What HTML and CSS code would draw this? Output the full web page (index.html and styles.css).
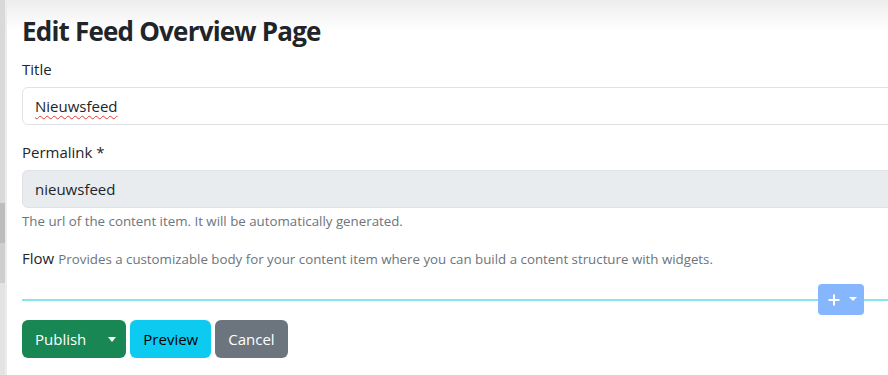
FILE: index.html
```html
<!DOCTYPE html>
<html>
<head>
<meta charset="utf-8">
<link rel="stylesheet" href="styles.css">
</head>
<body>
<div class="layout">
  <div class="rail">
    <div class="rail-track">
      <div class="rail-a"></div>
      <div class="rail-thumb"></div>
      <div class="rail-b"></div>
      <div class="rail-c"></div>
    </div>
    <div class="rail-edge"></div>
  </div>
  <main class="main">
    <h1 class="title">Edit Feed Overview Page</h1>
    <div class="field">
      <label class="label">Title</label>
      <div class="input"><span class="spell">Nieuwsfeed</span></div>
    </div>
    <div class="field">
      <label class="label">Permalink *</label>
      <div class="input input-disabled">nieuwsfeed</div>
      <div class="hint">The url of the content item. It will be automatically generated.</div>
    </div>
    <div class="field flow">
      <span class="label-inline">Flow</span> <span class="hint-inline">Provides a customizable body for your content item where you can build a content structure with widgets.</span>
    </div>
    <div class="flow-line">
      <button class="add-btn">
        <svg width="12" height="12" viewBox="0 0 12 12"><path d="M6 0.5V11.5M0.5 6H11.5" stroke="#fff" stroke-width="2"/></svg>
        <span class="caret caret-sm"></span>
      </button>
    </div>
    <div class="actions">
      <div class="split">
        <button class="btn btn-green">Publish</button>
        <button class="btn btn-green toggle"><span class="caret"></span></button>
      </div>
      <button class="btn btn-cyan">Preview</button>
      <button class="btn btn-grey">Cancel</button>
    </div>
  </main>
</div>
</body>
</html>
```
FILE: styles.css
```css
html, body {
  margin: 0;
  padding: 0;
  background: #fff;
  overflow: hidden;
  font-family: "Open Sans", "Noto Sans", sans-serif;
  color: #212529;
}
.layout {
  display: flex;
  width: 888px;
  height: 375px;
}
.rail {
  display: flex;
  flex: 0 0 7px;
}
.rail-track {
  width: 5px;
  display: flex;
  flex-direction: column;
}
.rail-a { height: 203px; background: #d9d9d9; }
.rail-thumb { height: 40px; background: #bcbcbc; }
.rail-b { height: 40px; background: #cfcfcf; }
.rail-c { flex: 1; background: #e3e3e3; }
.rail-edge { width: 2px; background: #ececec; }
.main {
  flex: 1;
  padding: 0 0 0 15px;
  min-width: 0;
  background: linear-gradient(#ededed 0px, #fafafa 22px, #fff 32px);
}
.title {
  margin: 0;
  padding-top: 14px;
  font-size: 26px;
  font-weight: 700;
  line-height: 34px;
  letter-spacing: -0.8px;
  color: #212529;
}
.field { margin-top: 11px; }
.label {
  display: block;
  font-size: 15px;
  line-height: 20px;
  margin-bottom: 8px;
}
.input {
  width: 900px;
  height: 38px;
  box-sizing: border-box;
  border: 1px solid #dee2e6;
  border-radius: 6px;
  padding: 0 12px;
  font-size: 15px;
  line-height: 36px;
  color: #212529;
}
.spell {
  text-decoration: underline wavy #e53935;
  text-decoration-thickness: 1px;
  text-underline-offset: 3px;
}
.input-disabled {
  background: #e9ecef;
}
.field + .field { margin-top: 17px; }
.hint {
  font-size: 13.3px;
  line-height: 18px;
  margin-top: 4px;
  color: #6c757d;
}
.field.flow { margin-top: 18px; line-height: 20px; }
.label-inline { font-size: 15px; }
.hint-inline { font-size: 13.3px; color: #6c757d; }
.flow-line {
  margin-top: 15px;
  height: 31px;
  display: flex;
  align-items: center;
  justify-content: flex-end;
  padding-right: 24px;
  background: linear-gradient(transparent 15px, #88e3f3 15px, #88e3f3 17px, transparent 17px);
}
.add-btn {
  width: 46px;
  height: 31px;
  border: 0;
  border-radius: 4px;
  background: #86b7fe;
  display: flex;
  align-items: center;
  justify-content: center;
  gap: 9px;
  padding: 0 0 0 2px;
}
.caret {
  display: inline-block;
  width: 0;
  height: 0;
  border-left: 4.5px solid transparent;
  border-right: 4.5px solid transparent;
  border-top: 5px solid #fff;
}
.caret-sm {
  border-left-width: 4px;
  border-right-width: 4px;
  border-top-width: 4px;
  margin-top: -2px;
}
.actions {
  display: flex;
  gap: 4px;
  margin-top: 5px;
}
.split { display: flex; }
.btn {
  height: 38px;
  border: 0;
  border-radius: 6px;
  padding: 0 13px;
  font-family: inherit;
  font-size: 15px;
  line-height: 38px;
  color: #fff;
}
.btn-green { background: #198754; }
.split .btn:first-child { border-radius: 6px 0 0 6px; padding: 0 11px 0 13px; }
.toggle { border-radius: 0 6px 6px 0; padding: 0 10px 0 11px; display: flex; align-items: center; }
.btn-cyan { background: #0dcaf0; color: #000; }
.btn-grey { background: #6c757d; }
```
